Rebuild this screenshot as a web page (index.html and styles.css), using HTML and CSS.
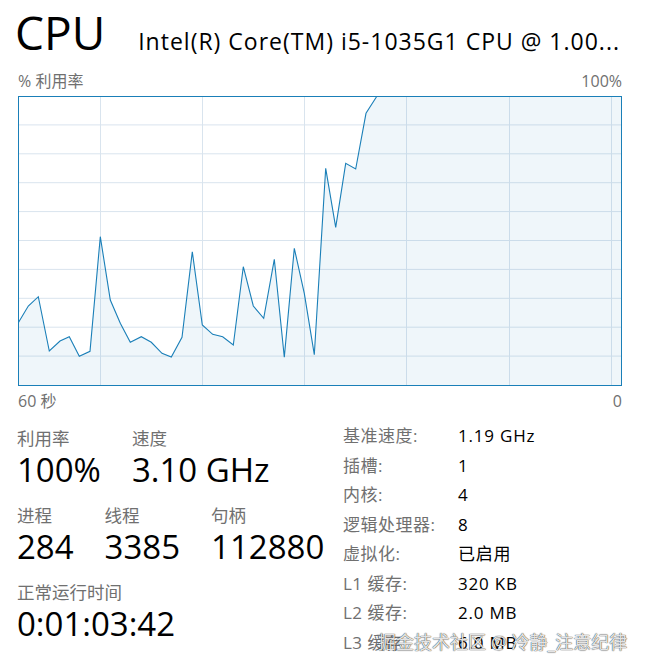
FILE: index.html
```html
<!DOCTYPE html>
<html lang="zh-CN">
<head>
<meta charset="utf-8">
<title>CPU</title>
<link rel="stylesheet" href="styles.css">
</head>
<body>
<div class="page">
  <header class="header">
    <div class="title">CPU</div>
    <div class="model">Intel(R) Core(TM) i5-1035G1 CPU @ 1.00...</div>
  </header>
  <div class="axis axis-top"><span>% 利用率</span><span>100%</span></div>
  <svg class="chart" width="604" height="290" viewBox="0 0 604 290">
    <g class="grid">
      <line x1="0" y1="28.9" x2="604" y2="28.9"/>
      <line x1="0" y1="57.8" x2="604" y2="57.8"/>
      <line x1="0" y1="86.7" x2="604" y2="86.7"/>
      <line x1="0" y1="115.6" x2="604" y2="115.6"/>
      <line x1="0" y1="144.5" x2="604" y2="144.5"/>
      <line x1="0" y1="173.4" x2="604" y2="173.4"/>
      <line x1="0" y1="202.3" x2="604" y2="202.3"/>
      <line x1="0" y1="231.2" x2="604" y2="231.2"/>
      <line x1="0" y1="260.1" x2="604" y2="260.1"/>
      <line x1="82.5" y1="0" x2="82.5" y2="290"/>
      <line x1="184.5" y1="0" x2="184.5" y2="290"/>
      <line x1="286.5" y1="0" x2="286.5" y2="290"/>
      <line x1="388.5" y1="0" x2="388.5" y2="290"/>
      <line x1="491.5" y1="0" x2="491.5" y2="290"/>
      <line x1="593.5" y1="0" x2="593.5" y2="290"/>
    </g>
    <polygon class="area" points="0.3,226.7 10.3,210 20.3,200.7 31.3,255 42,245 51.3,240.7 61.3,260.3 72,255.3 82.3,140.7 92.3,204 102.3,227.3 112.3,246.3 123.3,240.7 133.3,246.3 144,257.3 153.3,261 164,241.3 174.3,155.7 184.3,229 194.7,238.3 204.7,240.7 215.3,249 225.3,170.7 235.3,210 245.7,222.3 256.3,163.3 266.3,261.3 276.3,152.3 286.3,197.3 296.3,258.7 307.7,72.3 317.7,131.3 327.7,67.3 337.7,73 348,17.3 358.7,0.5 603.5,0.5 603.5,289.5 0.5,289.5"/>
    <polyline class="line" points="0.3,226.7 10.3,210 20.3,200.7 31.3,255 42,245 51.3,240.7 61.3,260.3 72,255.3 82.3,140.7 92.3,204 102.3,227.3 112.3,246.3 123.3,240.7 133.3,246.3 144,257.3 153.3,261 164,241.3 174.3,155.7 184.3,229 194.7,238.3 204.7,240.7 215.3,249 225.3,170.7 235.3,210 245.7,222.3 256.3,163.3 266.3,261.3 276.3,152.3 286.3,197.3 296.3,258.7 307.7,72.3 317.7,131.3 327.7,67.3 337.7,73 348,17.3 358.7,0.5"/>
    <rect class="frame" x="0.5" y="0.5" width="603" height="289"/>
  </svg>
  <div class="axis axis-bottom"><span>60 秒</span><span>0</span></div>

  <section class="stats">
    <div class="stats-left">
      <div class="group">
        <div class="stat"><div class="label">利用率</div><div class="value">100%</div></div>
        <div class="stat"><div class="label">速度</div><div class="value">3.10 GHz</div></div>
      </div>
      <div class="group">
        <div class="stat"><div class="label">进程</div><div class="value">284</div></div>
        <div class="stat"><div class="label">线程</div><div class="value">3385</div></div>
        <div class="stat"><div class="label">句柄</div><div class="value">112880</div></div>
      </div>
      <div class="group">
        <div class="stat"><div class="label">正常运行时间</div><div class="value">0:01:03:42</div></div>
      </div>
    </div>
    <dl class="specs">
      <dt>基准速度:</dt><dd>1.19 GHz</dd>
      <dt>插槽:</dt><dd>1</dd>
      <dt>内核:</dt><dd>4</dd>
      <dt>逻辑处理器:</dt><dd>8</dd>
      <dt>虚拟化:</dt><dd>已启用</dd>
      <dt>L1 缓存:</dt><dd>320 KB</dd>
      <dt>L2 缓存:</dt><dd>2.0 MB</dd>
      <dt>L3 缓存:</dt><dd>6.0 MB</dd>
    </dl>
  </section>
  <div class="watermark">掘金技术社区 @ 冷静_注意纪律</div>
</div>
</body>
</html>
```

FILE: styles.css
```css
html, body {
  margin: 0;
  padding: 0;
  background: #ffffff;
}

body {
  font-family: "Open Sans", "Noto Sans CJK SC", sans-serif;
  color: #000000;
  width: 645px;
  height: 671px;
  overflow: hidden;
}

.page {
  position: relative;
  width: 645px;
  height: 671px;
}

.header {
  display: flex;
  align-items: baseline;
  height: 70px;
  padding-left: 15px;
  padding-top: 2px;
  box-sizing: border-box;
}

.title {
  font-size: 46px;
  line-height: 60px;
  font-weight: 400;
}

.model {
  font-size: 23px;
  line-height: 30px;
  letter-spacing: 1px;
  margin-left: 33px;
  white-space: nowrap;
}

.axis {
  display: flex;
  justify-content: space-between;
  width: 604px;
  margin-left: 18px;
  font-size: 16px;
  line-height: 20px;
  color: #707070;
}

.axis-top {
  margin-top: 1px;
  margin-bottom: 5px;
}

.axis-bottom {
  margin-top: 5px;
}

.chart {
  display: block;
  margin-left: 18px;
}

.grid line {
  stroke: #d9e4ee;
  stroke-width: 1;
}

.area {
  fill: rgba(17, 125, 187, 0.065);
  stroke: none;
}

.line {
  fill: none;
  stroke: #1a7fb8;
  stroke-width: 1.1;
  stroke-linejoin: miter;
}

.frame {
  fill: none;
  stroke: #1a7fb8;
  stroke-width: 1;
}

.stats {
  display: flex;
  margin-top: 16px;
}

.stats-left {
  width: 325px;
  padding-left: 17px;
  box-sizing: border-box;
}

.group {
  display: flex;
  gap: 31px;
  margin-bottom: 13px;
}

.label {
  font-size: 17.5px;
  line-height: 22px;
  color: #707070;
}

.value {
  font-size: 33px;
  line-height: 42px;
  white-space: nowrap;
}

.specs {
  display: grid;
  grid-template-columns: 115px auto;
  margin: -5px 0 0 18px;
  font-size: 17px;
  line-height: 28.8px;
}

.specs dt {
  color: #707070;
  letter-spacing: 0.5px;
}

.specs dd {
  margin: 0;
  color: #000000;
  letter-spacing: 0.8px;
}

.watermark {
  position: absolute;
  left: 378px;
  top: 629px;
  font-size: 18px;
  line-height: 26px;
  color: rgba(255, 255, 255, 0.9);
  text-shadow: 0 0 1px rgba(0, 0, 0, 0.7), 0 0 1px rgba(0, 0, 0, 0.7);
  white-space: nowrap;
}
```
